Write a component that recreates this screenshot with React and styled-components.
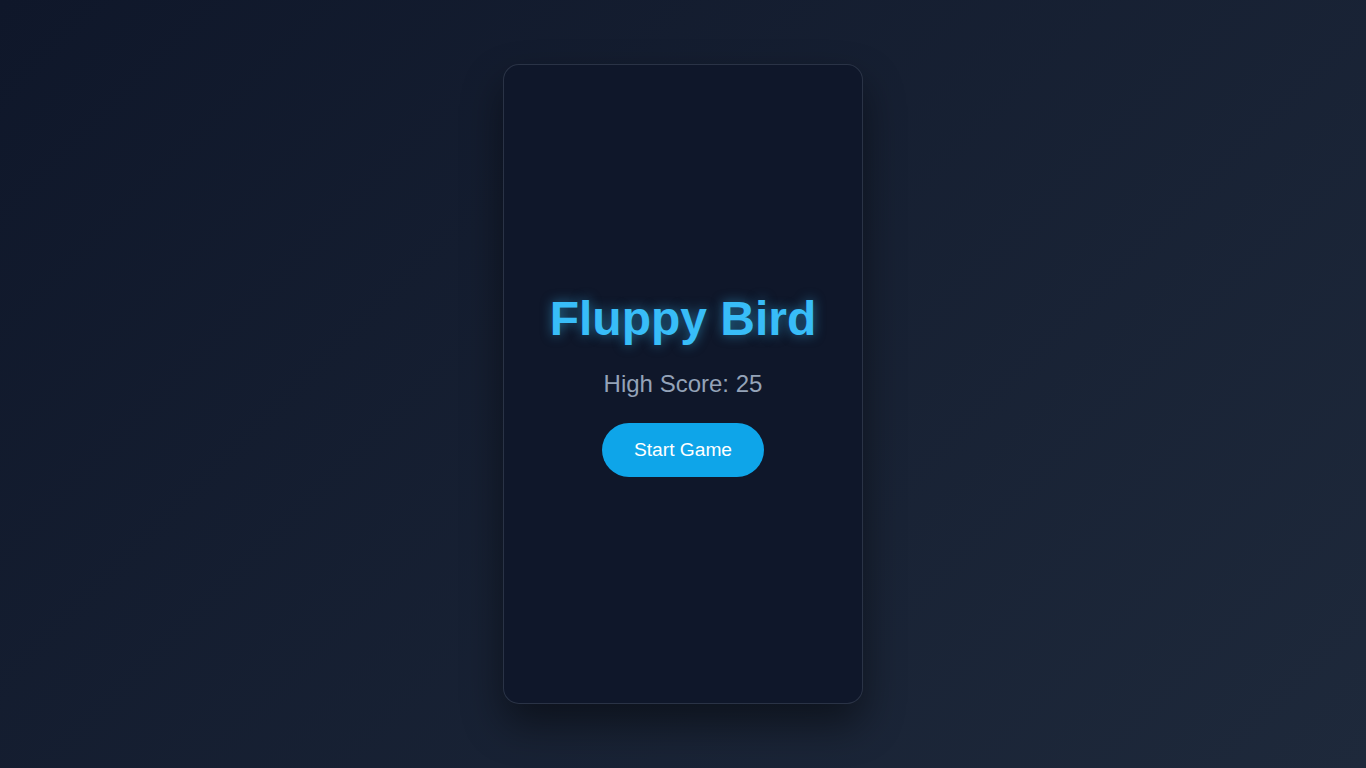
import React from "react"
import styled, { createGlobalStyle } from "styled-components"

const GlobalStyle = createGlobalStyle`
  html, body {
    margin: 0;
    padding: 0;
    height: 100%;
  }
  body {
    font-family: "Liberation Sans", Arial, sans-serif;
    background: linear-gradient(135deg, #0f172a 0%, #1e293b 100%);
    min-height: 100vh;
  }
  #root {
    min-height: 100vh;
  }
`

const Page = styled.main`
  min-height: 100vh;
  display: flex;
  align-items: center;
  justify-content: center;
`

const Card = styled.section`
  box-sizing: border-box;
  width: 360px;
  height: 640px;
  background: #0f172a;
  border: 1px solid rgba(148, 163, 184, 0.2);
  border-radius: 16px;
  box-shadow: 0 20px 40px rgba(0, 0, 0, 0.45);
  display: flex;
  flex-direction: column;
  align-items: center;
  justify-content: center;
`

const Title = styled.h1`
  margin: 0 0 24px;
  font-size: 48px;
  font-weight: 700;
  color: #38bdf8;
  text-shadow: 0 0 12px rgba(56, 189, 248, 0.5);
`

const Score = styled.p`
  margin: 0 0 25px;
  font-size: 24px;
  color: #94a3b8;
`

const StartButton = styled.button`
  font-family: inherit;
  font-size: 19.2px;
  color: #fff;
  background: #0ea5e9;
  border: none;
  border-radius: 9999px;
  padding: 16px 32px;
  cursor: pointer;
`

export default function App() {
  return (
    <>
      <GlobalStyle />
      <Page>
        <Card>
          <Title>Fluppy Bird</Title>
          <Score>High Score: 25</Score>
          <StartButton>Start Game</StartButton>
        </Card>
      </Page>
    </>
  )
}
